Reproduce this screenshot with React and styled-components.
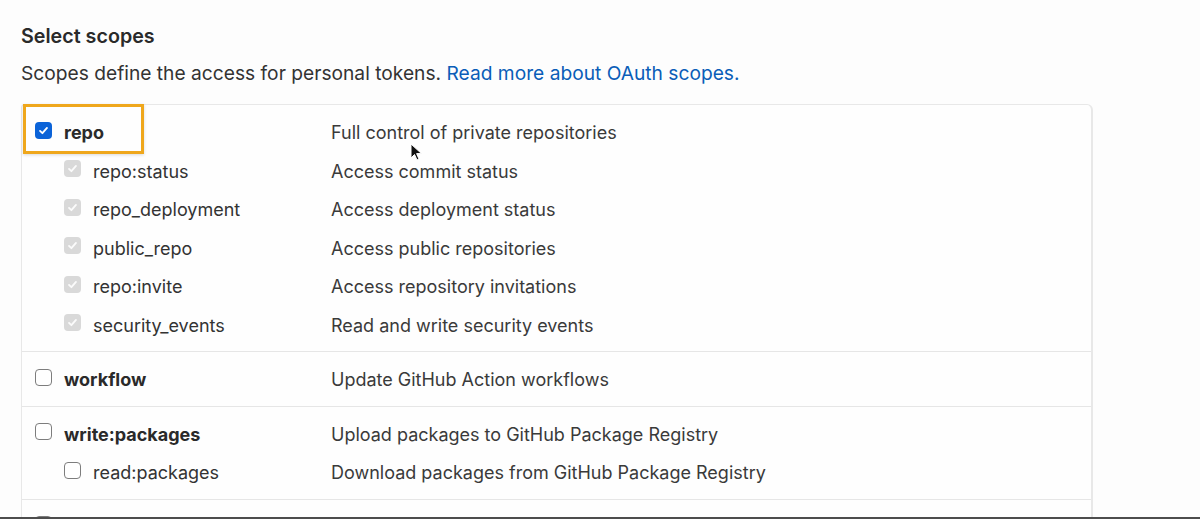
import React from "react";
import styled, { createGlobalStyle } from "styled-components";

const scopeGroups = [
  {
    name: "repo",
    description: "Full control of private repositories",
    checked: true,
    highlight: true,
    children: [
      { name: "repo:status", description: "Access commit status" },
      { name: "repo_deployment", description: "Access deployment status" },
      { name: "public_repo", description: "Access public repositories" },
      { name: "repo:invite", description: "Access repository invitations" },
      { name: "security_events", description: "Read and write security events" },
    ],
  },
  {
    name: "workflow",
    description: "Update GitHub Action workflows",
    children: [],
  },
  {
    name: "write:packages",
    description: "Upload packages to GitHub Package Registry",
    children: [
      {
        name: "read:packages",
        description: "Download packages from GitHub Package Registry",
        unchecked: true,
      },
    ],
  },
  { name: "", description: "", children: [] },
];

const CheckMark = ({ color }) => (
  <svg width="11" height="11" viewBox="0 0 12 12">
    <path
      d="M2.2 6.4 L4.8 8.9 L9.8 3.2"
      fill="none"
      stroke={color}
      strokeWidth="2"
      strokeLinecap="round"
      strokeLinejoin="round"
    />
  </svg>
);

const App = () => {
  return (
    <>
      <GlobalStyle />
      <Frame>
        <Content>
          <Heading>Select scopes</Heading>
          <Description>
            Scopes define the access for personal tokens.{" "}
            <MoreLink href="#">Read more about OAuth scopes.</MoreLink>
          </Description>

          <ScopeTable>
            {scopeGroups.map((group, i) => (
              <Group key={i}>
                <Row>
                  <NameCell>
                    <Box variant={group.checked ? "checked" : "empty"}>
                      {group.checked && <CheckMark color="#fff" />}
                    </Box>
                    <ScopeName bold>{group.name}</ScopeName>
                    {group.highlight && <Highlight />}
                  </NameCell>
                  <ScopeText>{group.description}</ScopeText>
                </Row>
                {group.children.map((child) => (
                  <Row key={child.name}>
                    <NameCell nested>
                      <Box variant={child.unchecked ? "empty" : "disabled"}>
                        {!child.unchecked && <CheckMark color="#fbfbfb" />}
                      </Box>
                      <ScopeName>{child.name}</ScopeName>
                    </NameCell>
                    <ScopeText>{child.description}</ScopeText>
                  </Row>
                ))}
              </Group>
            ))}
          </ScopeTable>
        </Content>
        <BottomEdge />

        {/* mouse pointer */}
        <Pointer width="14" height="20" viewBox="0 0 14 20">
          <path
            d="M1 1 L1 15 L4.5 11.5 L7 17 L9 16 L6.6 10.6 L11.5 10.6 Z"
            fill="#111"
            stroke="#fff"
            strokeWidth="1"
          />
        </Pointer>
      </Frame>
    </>
  );
};

const GlobalStyle = createGlobalStyle`
  html, body {
    margin: 0;
    padding: 0;
    background: #fdfdfd;
  }
  body {
    font-family: Inter, "Liberation Sans", Arial, sans-serif;
    color: #333;
  }
`;

const Frame = styled.div`
  position: relative;
  width: 1200px;
  height: 519px;
  display: flex;
  flex-direction: column;
  overflow: hidden;
  background: #fdfdfd;
`;

const Content = styled.div`
  flex: 1;
  overflow: hidden;
  padding: 24px 107px 0 21px;
`;

const Heading = styled.h3`
  margin: 0;
  font-size: 19.7px;
  line-height: 24px;
  font-weight: 600;
  color: #2a2a2a;
`;

const Description = styled.p`
  margin: 13px 0 0;
  font-size: 19.2px;
  line-height: 24px;
  color: #333;
`;

const MoreLink = styled.a`
  color: #0a5db8;
  text-decoration: none;
`;

const ScopeTable = styled.div`
  margin-top: 19px;
  border: 1px solid #e8e8e8;
  border-right-width: 2px;
  border-bottom: none;
  border-radius: 4px 6px 0 0;
  background: #fefefe;
`;

const Group = styled.div`
  padding: 8.5px 0 6.5px;
  border-bottom: 1.5px solid #e6e6e6;
`;

const Row = styled.div`
  display: grid;
  grid-template-columns: 309px 1fr;
  align-items: center;
  height: 38.5px;
`;

const NameCell = styled.div`
  position: relative;
  display: flex;
  align-items: center;
  gap: 12px;
  height: 100%;
  padding-left: ${({ nested }) => (nested ? "42px" : "13px")};
`;

const Box = styled.span`
  display: inline-flex;
  align-items: center;
  justify-content: center;
  box-sizing: border-box;
  width: 17px;
  height: 17px;
  margin-top: -5px;
  border-radius: 4px;
  flex-shrink: 0;
  background: ${({ variant }) =>
    variant === "checked" ? "#0b63d8" : variant === "disabled" ? "#d9d9d9" : "#fff"};
  border: ${({ variant }) =>
    variant === "empty" ? "1.5px solid #7d7d7d" : "none"};
`;

const ScopeName = styled.span`
  font-size: 18px;
  font-weight: ${({ bold }) => (bold ? 650 : 400)};
  color: ${({ bold }) => (bold ? "#2a2a2a" : "#333")};
`;

const ScopeText = styled.span`
  font-size: 18px;
  color: #3a3a3a;
`;

const Highlight = styled.span`
  position: absolute;
  left: 1px;
  top: -9.5px;
  width: 121px;
  height: 50px;
  box-sizing: border-box;
  border: 3px solid #efa71c;
  box-shadow: 0 1px 3px rgba(0, 0, 0, 0.15);
  pointer-events: none;
`;

const BottomEdge = styled.div`
  height: 2px;
  background: #4d4d4d;
`;

const Pointer = styled.svg`
  position: absolute;
  left: 410px;
  top: 143px;
`;

export default App;
